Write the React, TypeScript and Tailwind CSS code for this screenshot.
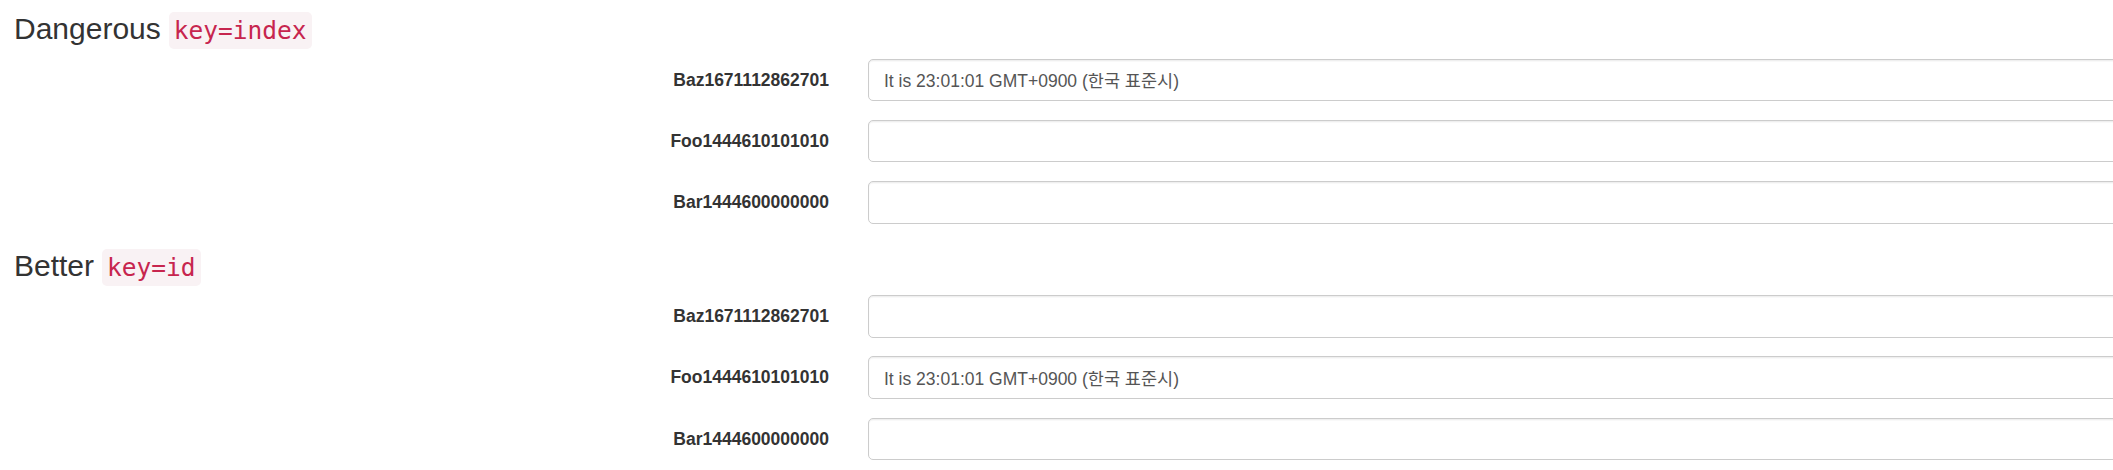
import React from "react";

interface Row {
  label: string;
  value: string;
}

const TIME_TEXT = "It is 23:01:01 GMT+0900 (한국 표준시)";

const dangerousRows: Row[] = [
  { label: "Baz1671112862701", value: TIME_TEXT },
  { label: "Foo1444610101010", value: "" },
  { label: "Bar1444600000000", value: "" },
];

const betterRows: Row[] = [
  { label: "Baz1671112862701", value: "" },
  { label: "Foo1444610101010", value: TIME_TEXT },
  { label: "Bar1444600000000", value: "" },
];

function Heading({ title, code }: { title: string; code: string }) {
  return (
    <h3 className="flex h-[37px] items-baseline font-['Liberation_Sans',Arial,sans-serif] text-[30px] font-medium text-[#333]">
      <span className="leading-[33px]">{title}</span>
      <code className="ml-[8px] inline-block rounded-[5px] bg-[#f9f2f4] px-[5px] font-['DejaVu_Sans_Mono',monospace] text-[24.5px] leading-[37px] text-[#c7254e]">
        {code}
      </code>
    </h3>
  );
}

function FormRows({ rows }: { rows: Row[] }) {
  return (
    <form className="mt-[9.5px] flex flex-col gap-[18.75px]">
      {rows.map((row) => (
        <div key={row.label} className="flex h-[42.5px] items-center">
          <label className="w-[815px] text-right font-['Liberation_Sans',Arial,sans-serif] text-[17.5px] font-bold text-[#333]">
            {row.label}
          </label>
          <input
            type="text"
            readOnly
            value={row.value}
            className="ml-[39px] h-[42.5px] w-[1400px] rounded-[5px] border border-[#ccc] bg-white pl-[15px] font-['Liberation_Sans','Noto_Sans_CJK_KR',sans-serif] text-[17.5px] text-[#555] shadow-[inset_0_1.25px_1.25px_rgba(0,0,0,0.075)] outline-none"
          />
        </div>
      ))}
    </form>
  );
}

export default function App() {
  return (
    <div className="h-[470px] w-[2113px] overflow-hidden bg-white">
      <div className="w-[2300px] pl-[14px] pt-[12px]">
        <section>
          <Heading title="Dangerous" code="key=index" />
          <FormRows rows={dangerousRows} />
        </section>
        <section className="mt-[25px]">
          <Heading title="Better" code="key=id" />
          <FormRows rows={betterRows} />
        </section>
      </div>
    </div>
  );
}
